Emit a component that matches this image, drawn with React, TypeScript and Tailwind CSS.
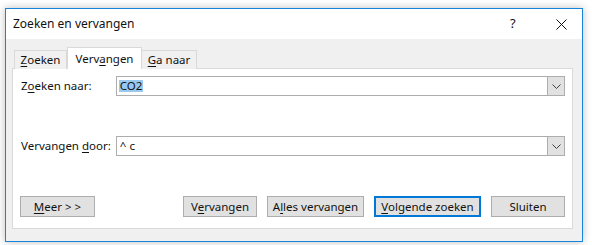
import React from "react";

const font = { fontFamily: '"Noto Sans", "Segoe UI", Arial, sans-serif' };

function U({ children }: { children: React.ReactNode }) {
  return <span className="underline underline-offset-2">{children}</span>;
}

function Combo({ children }: { children: React.ReactNode }) {
  return (
    <div className="flex h-[20px] w-[450px] border border-[#adadad] bg-white">
      <div className="flex flex-1 items-center pl-[2px] leading-none">{children}</div>
      <div className="flex w-[17px] items-center justify-center border-l border-[#adadad] bg-[#e1e1e1]">
        <svg width="9" height="5" viewBox="0 0 9 5">
          <path d="M0.5 0.5 L4.5 4.5 L8.5 0.5" fill="none" stroke="#404040" strokeWidth="1" />
        </svg>
      </div>
    </div>
  );
}

function Btn({ children, w, primary }: { children: React.ReactNode; w: string; primary?: boolean }) {
  return (
    <div
      className={`flex h-[21px] items-center justify-center bg-[#e1e1e1] ${w} ${
        primary ? "border-2 border-[#0078d7]" : "border border-[#adadad]"
      }`}
    >
      {children}
    </div>
  );
}

export default function App() {
  return (
    <div className="h-[245px] w-[592px] bg-white pl-[5px] pt-[8px] text-[11.5px] text-[#111]" style={font}>
      <div className="flex h-[234px] w-[578px] flex-col border border-[#1883d7] bg-[#f0f0f0] shadow-[0_0_8px_rgba(0,0,0,0.25)]">
        {/* title bar */}
        <div className="flex h-[30px] items-center bg-white pl-[7px] text-[12px]">
          <span className="flex-1">Zoeken en vervangen</span>
          <span className="w-[12px] text-[13px]">?</span>
          <span className="ml-[33px] mr-[15px] flex w-[12px] items-center justify-center">
            <svg width="11" height="11" viewBox="0 0 11 11">
              <path d="M0.5 0.5 L10.5 10.5 M10.5 0.5 L0.5 10.5" stroke="#111" strokeWidth="1" />
            </svg>
          </span>
        </div>

        {/* tabs */}
        <div className="relative z-10 ml-[8px] mt-[8px] -mb-px flex h-[22px] items-end">
          <div className="flex h-[19px] w-[53px] items-center justify-center border border-b-0 border-[#d9d9d9] bg-[#f0f0f0]">
            <span>
              <U>Z</U>oeken
            </span>
          </div>
          <div className="flex h-[22px] w-[75px] items-center justify-center border border-b-0 border-[#d9d9d9] bg-white">
            <span>
              Verv<U>a</U>ngen
            </span>
          </div>
          <div className="flex h-[19px] w-[55px] items-center justify-center border border-b-0 border-l-0 border-[#d9d9d9] bg-[#f0f0f0]">
            <span>
              <U>G</U>a naar
            </span>
          </div>
        </div>

        {/* panel */}
        <div className="ml-[6px] flex h-[161px] w-[561px] flex-col border border-[#d9d9d9] bg-white px-[7px] pt-[7px]">
          <div className="flex items-center">
            <span className="w-[96px] pl-px">
              Z<U>o</U>eken naar:
            </span>
            <Combo>
              <span className="bg-[#99c9ef] px-px">CO2</span>
            </Combo>
          </div>
          <div className="mt-[40px] flex items-center">
            <span className="w-[96px] pl-px">
              Vervangen <U>d</U>oor:
            </span>
            <Combo>
              <span className="pl-px">^ c</span>
            </Combo>
          </div>
          <div className="mt-[40px] flex items-center">
            <Btn w="w-[75px]">
              <span>
                <U>M</U>eer &gt; &gt;
              </span>
            </Btn>
            <div className="flex-1" />
            <Btn w="w-[74px]">
              <span>
                V<U>e</U>rvangen
              </span>
            </Btn>
            <div className="w-[10px]" />
            <Btn w="w-[97px]">
              <span>
                A<U>l</U>les vervangen
              </span>
            </Btn>
            <div className="w-[10px]" />
            <Btn w="w-[107px]" primary>
              <span>
                <U>V</U>olgende zoeken
              </span>
            </Btn>
            <div className="w-[10px]" />
            <Btn w="w-[74px]">
              <span>Sluiten</span>
            </Btn>
          </div>
        </div>
      </div>
    </div>
  );
}
